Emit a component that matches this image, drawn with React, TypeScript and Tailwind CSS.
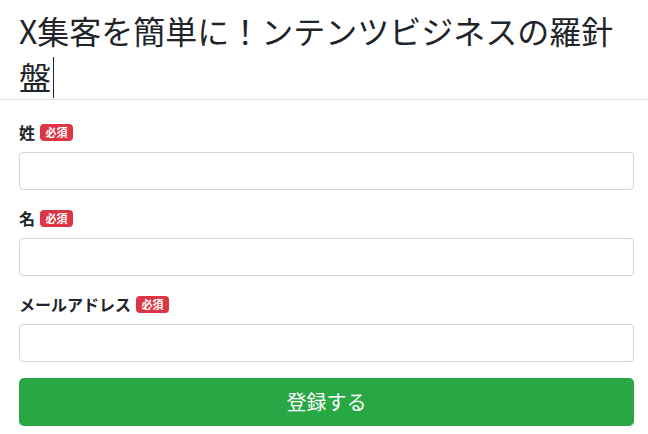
import React from "react";

const font = { fontFamily: '"Noto Sans CJK JP", "Noto Sans", sans-serif' };

function Badge() {
  return (
    <span className="ml-[5px] inline-flex h-[17px] items-center rounded-[4px] bg-[#dc3545] px-[5.5px] text-[11px] font-bold leading-none text-white">
      必須
    </span>
  );
}

function Field({ label }: { label: string }) {
  return (
    <div className="mb-4">
      <label className="mb-2 flex h-[24px] items-center text-[16px] font-bold leading-[24px] text-[#212529]">
        <span>{label}</span>
        <Badge />
      </label>
      <input
        type="text"
        className="block h-[38px] w-full rounded-[4px] border border-[#ced4da] bg-white px-3 text-base outline-none"
      />
    </div>
  );
}

export default function App() {
  return (
    <div className="min-h-[434px] w-[648px] bg-white" style={font}>
      <div className="h-[100px] border-b border-[#dee2e6] pl-[19px] pr-[14px] pt-[11px]">
        <h1 className="text-[32px] font-normal leading-[38.4px] text-[#212529]">
          X集客を簡単に！ンテンツビジネスの羅針盤
          <span className="ml-[2px] inline-block h-[41px] w-px translate-y-[8px] bg-[#212529] align-baseline" />
        </h1>
      </div>
      <div className="pl-[19px] pr-[14px] pt-5">
        <Field label="姓" />
        <Field label="名" />
        <Field label="メールアドレス" />
        <button className="block h-[48px] w-full rounded-[5px] bg-[#28a745] text-[20px] leading-[30px] text-white">
          登録する
        </button>
      </div>
    </div>
  );
}
